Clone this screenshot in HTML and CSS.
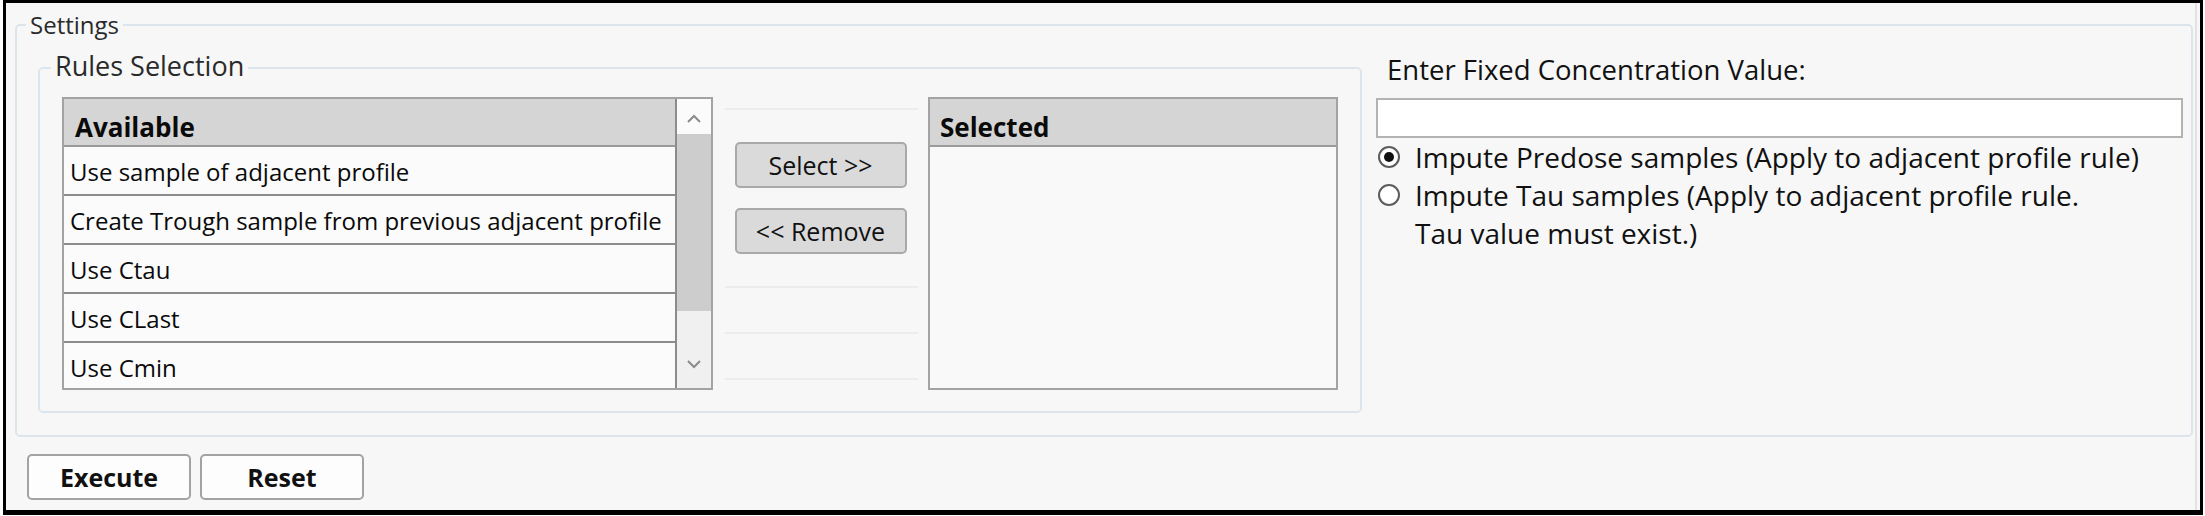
FILE: index.html
```html
<!DOCTYPE html>
<html lang="en">
<head>
<meta charset="utf-8">
<title>Settings</title>
<link rel="stylesheet" href="styles.css">
</head>
<body>
<div class="window">
  <div class="client">
    <div class="group settings">
      <div class="group-title settings-title">Settings</div>
      <div class="settings-body">
        <div class="group rules">
          <div class="group-title rules-title">Rules Selection</div>
          <div class="rules-body">
            <div class="list available">
              <div class="list-col">
                <div class="list-head">Available</div>
                <div class="list-row">Use sample of adjacent profile</div>
                <div class="list-row">Create Trough sample from previous adjacent profile</div>
                <div class="list-row">Use Ctau</div>
                <div class="list-row">Use CLast</div>
                <div class="list-row list-row-last">Use Cmin</div>
              </div>
              <div class="scrollbar">
                <div class="sb-btn sb-up">
                  <svg width="16" height="10" viewBox="0 0 16 10"><path d="M2 8 L8 2 L14 8" fill="none" stroke="#8a8a8a" stroke-width="2"/></svg>
                </div>
                <div class="sb-thumb"></div>
                <div class="sb-track"></div>
                <div class="sb-btn sb-down">
                  <svg width="16" height="10" viewBox="0 0 16 10"><path d="M2 2 L8 8 L14 2" fill="none" stroke="#8a8a8a" stroke-width="2"/></svg>
                </div>
              </div>
            </div>
            <div class="mid">
              <div class="mid-rule"></div>
              <div class="mid-buttons">
                <button class="move-btn">Select &gt;&gt;</button>
                <button class="move-btn">&lt;&lt; Remove</button>
              </div>
              <div class="mid-rule"></div>
              <div class="mid-rule mid-rule-b"></div>
              <div class="mid-rule mid-rule-b"></div>
            </div>
            <div class="list selected">
              <div class="list-col">
                <div class="list-head">Selected</div>
                <div class="list-body"></div>
              </div>
            </div>
          </div>
        </div>
        <div class="fixed">
          <div class="fixed-label">Enter Fixed Concentration Value:</div>
          <div class="fixed-input"></div>
          <div class="radio-row">
            <span class="radio radio-on"></span>
            <span class="radio-text">Impute Predose samples (Apply to adjacent profile rule)</span>
          </div>
          <div class="radio-row">
            <span class="radio"></span>
            <span class="radio-text">Impute Tau samples (Apply to adjacent profile rule.<br>Tau value must exist.)</span>
          </div>
        </div>
      </div>
    </div>
    <div class="actions">
      <button class="action-btn">Execute</button>
      <button class="action-btn">Reset</button>
    </div>
  </div>
</div>
</body>
</html>
```
FILE: styles.css
```css
* { box-sizing: border-box; }
html, body { margin: 0; padding: 0; background: #ffffff; }
body {
  font-family: "Open Sans", "Noto Sans", sans-serif;
  color: #111;
  width: 2205px;
  height: 516px;
  overflow: hidden;
}
.window {
  margin-left: 3px;
  width: 2200px;
  height: 515px;
  border: 3px solid #000;
  border-bottom-width: 5px;
  background: #f7f7f7;
}
.client {
  height: 100%;
  margin-right: 3px;
  border-right: 2px solid #e2e2e2;
  padding-top: 21px;
  padding-left: 9px;
  padding-right: 2px;
}
.group {
  border: 2px solid #dde5ec;
  border-radius: 5px;
}
.group-title {
  width: max-content;
  padding: 0 4px;
  background: #f7f7f7;
  color: #2a2a2a;
}
.settings { padding-bottom: 22px; }
.settings-title {
  margin: -14px 0 0 9px;
  font-size: 24px;
  line-height: 26px;
}
.settings-body {
  display: flex;
  align-items: flex-start;
}
.rules {
  margin: 29px 0 0 21px;
}
.rules-title {
  margin: -17px 0 0 11px;
  font-size: 27px;
  line-height: 28px;
}
.rules-body {
  display: flex;
  padding: 17px 22px 21px 22px;
}
.list {
  display: flex;
  height: 293px;
  border: 2px solid #a3a3a3;
  background: #fbfbfb;
}
.available { width: 651px; }
.selected { width: 410px; }
.list-col {
  flex: 1;
  display: flex;
  flex-direction: column;
  overflow: hidden;
}
.list-head {
  height: 48px;
  flex: none;
  background: #d5d5d5;
  border-bottom: 2px solid #9a9a9a;
  padding: 11px 0 0 11px;
  line-height: 34px;
  font-size: 26px;
  font-weight: 700;
  color: #0a0a0a;
  white-space: nowrap;
}
.selected .list-head { padding-left: 10px; }
.list-row {
  height: 49px;
  flex: none;
  border-bottom: 2px solid #8c8c8c;
  padding: 3px 0 0 6px;
  line-height: 44px;
  font-size: 24px;
  color: #0a0a0a;
  white-space: nowrap;
}
.list-row-last { border-bottom: none; }
.list-body { flex: 1; background: #f9f9f9; }
.scrollbar {
  width: 36px;
  flex: none;
  border-left: 2px solid #8c8c8c;
  display: flex;
  flex-direction: column;
}
.sb-btn {
  display: flex;
  align-items: center;
  justify-content: center;
  height: 35px;
  flex: none;
}
.sb-up { background: #fbfbfb; padding-top: 4px; }
.sb-thumb { height: 177px; flex: none; background: #cdcdcd; }
.sb-track { flex: 1; background: #f0f0f0; }
.sb-down { background: #f0f0f0; height: 42px; padding-bottom: 6px; }
.mid {
  width: 215px;
  flex: none;
  display: flex;
  flex-direction: column;
  padding: 11px 10px 0 12px;
}
.mid-rule { height: 2px; background: #ececec; flex: none; }
.mid-buttons {
  display: flex;
  flex-direction: column;
  align-items: center;
  gap: 20px;
  padding: 32px 0 32px 0;
}
.mid-rule-b { margin-top: 44px; }
.move-btn {
  width: 172px;
  height: 46px;
  margin-right: 2px;
  background: #dadada;
  border: 2px solid #a9a9a9;
  border-radius: 5px;
  font-family: "Open Sans", "Noto Sans", sans-serif;
  font-size: 25px;
  color: #111;
  padding: 0;
}
.fixed {
  flex: 1;
  margin: 18px 8px 0 14px;
}
.fixed-label {
  font-size: 27.5px;
  line-height: 28px;
  padding-left: 11px;
  color: #111;
  white-space: nowrap;
}
.fixed-input {
  margin-top: 14px;
  height: 40px;
  background: #ffffff;
  border: 2px solid #b3b3b3;
}
.radio-row {
  display: flex;
  align-items: flex-start;
  font-size: 28px;
  line-height: 38px;
  white-space: nowrap;
}
.radio {
  flex: none;
  width: 22px;
  height: 22px;
  margin: 8px 15px 0 2px;
  border: 2px solid #5c5c5c;
  border-radius: 50%;
  background: #fff;
  display: flex;
  align-items: center;
  justify-content: center;
}
.radio-on::after {
  content: "";
  width: 10px;
  height: 10px;
  border-radius: 50%;
  background: #111;
}
.actions {
  display: flex;
  gap: 9px;
  margin: 17px 0 0 12px;
}
.action-btn {
  width: 164px;
  height: 46px;
  background: #fdfdfd;
  border: 2px solid #a3a3a3;
  border-radius: 5px;
  font-family: "Open Sans", "Noto Sans", sans-serif;
  font-size: 25px;
  font-weight: 700;
  color: #111;
  padding: 0;
}
```
